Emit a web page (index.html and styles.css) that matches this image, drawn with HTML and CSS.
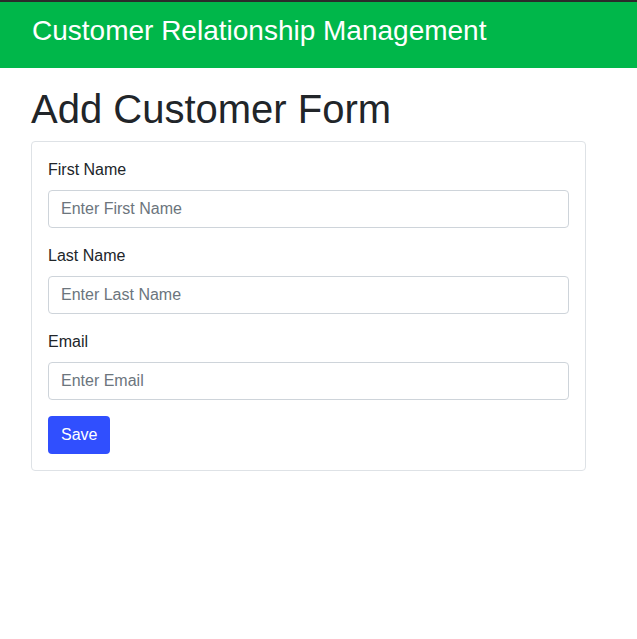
FILE: index.html
```html
<!DOCTYPE html>
<html lang="en">
<head>
<meta charset="utf-8">
<title>Add Customer</title>
<link rel="stylesheet" href="styles.css">
</head>
<body>
<header class="topbar">
  <span class="brand">Customer Relationship Management</span>
</header>
<main class="content">
  <h1 class="title">Add Customer Form</h1>
  <form class="card">
    <div class="field">
      <label class="label" for="fn">First Name</label>
      <input class="input" id="fn" type="text" placeholder="Enter First Name">
    </div>
    <div class="field">
      <label class="label" for="ln">Last Name</label>
      <input class="input" id="ln" type="text" placeholder="Enter Last Name">
    </div>
    <div class="field">
      <label class="label" for="em">Email</label>
      <input class="input" id="em" type="text" placeholder="Enter Email">
    </div>
    <div class="actions">
      <button class="btn" type="button">Save</button>
    </div>
  </form>
</main>
</body>
</html>
```

FILE: styles.css
```css
* { box-sizing: border-box; }
html, body {
  margin: 0;
  padding: 0;
  background: #fff;
  font-family: "Liberation Sans", Arial, sans-serif;
  color: #212529;
}
.topbar {
  border-top: 2px solid #2b2b2b;
  background: #00b74a;
  padding: 10px 32px 18px;
  line-height: 38px;
  height: 68px;
}
.brand {
  color: #fff;
  font-size: 28px;
}
.content {
  padding: 17px 0 0 31px;
  width: 586px;
}
.title {
  margin: 0 0 8px;
  font-size: 40px;
  font-weight: 400;
  line-height: 48px;
  color: #212529;
}
.card {
  border: 1px solid #dee2e6;
  border-radius: 4px;
  padding: 16px;
  display: flex;
  flex-direction: column;
}
.field {
  display: flex;
  flex-direction: column;
  margin-bottom: 16px;
}
.label {
  font-size: 16px;
  line-height: 24px;
  margin-bottom: 8px;
}
.input {
  height: 38px;
  border: 1px solid #ced4da;
  border-radius: 4px;
  padding: 6px 12px;
  font-family: inherit;
  font-size: 16px;
  color: #212529;
}
.input::placeholder { color: #6c757d; }
.actions { display: flex; }
.btn {
  height: 38px;
  padding: 0 13px;
  border: 0;
  border-radius: 4px;
  background: #304ffe;
  color: #fff;
  font-family: inherit;
  font-size: 16px;
}
```
